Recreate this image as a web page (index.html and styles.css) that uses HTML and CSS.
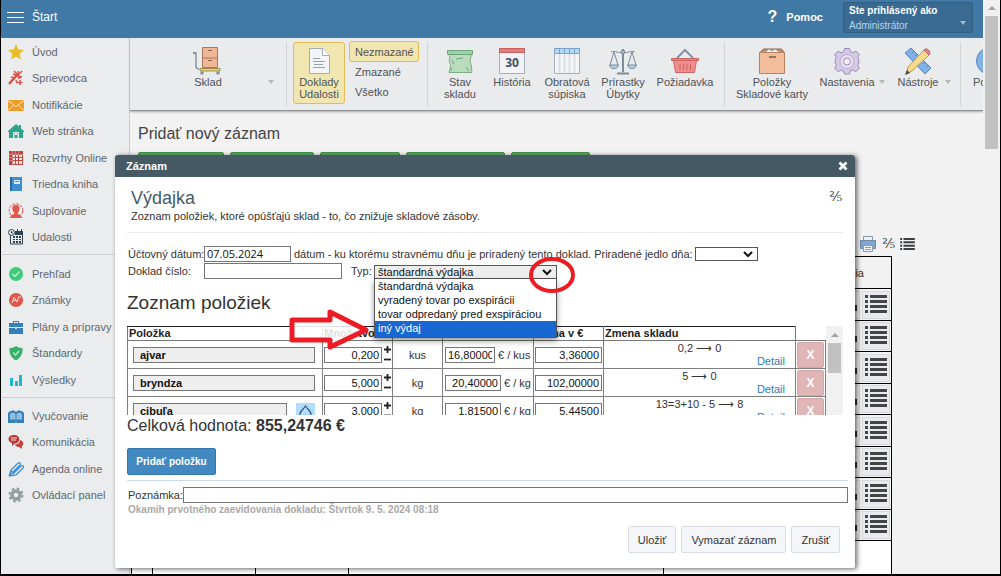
FILE: index.html
```
<!DOCTYPE html>
<html lang="sk">
<head>
    <meta charset="UTF-8">
    <meta name="viewport" content="width=device-width, initial-scale=1.0">
    <title>Výdajka</title>
    <link rel="stylesheet" href="styles.css">
</head>
<body>
    <!-- shared icons -->
    <svg class="sprite" aria-hidden="true">
        <symbol id="list" viewBox="0 0 22 18">
            <path d="M0 0h3v3H0zM5 0h17v3H5zM0 5h3v3H0zM5 5h17v3H5zM0 10h3v3H0zM5 10h17v3H5zM0 15h3v3H0zM5 15h17v3H5z"/>
        </symbol>
        <symbol id="caret" viewBox="0 0 10 7">
            <path d="M1 1l4 4 4-4" fill="none" stroke="#111" stroke-width="2"/>
        </symbol>
        <symbol id="plus" viewBox="0 0 10 10">
            <path d="M2 4.500h7M5.500 1v7" stroke="#222" stroke-width="1.800"/>
        </symbol>
        <symbol id="minus" viewBox="0 0 10 10">
            <path d="M2 4.500h7" stroke="#222" stroke-width="1.800"/>
        </symbol>
    </svg>

    <div class="app">
        <header class="topbar">
            <button class="menu-btn" aria-label="Menu"><i></i><i></i><i></i></button>
            <a class="start" href="#">Štart</a>
            <a class="help" href="#"><span class="help-mark">?</span>Pomoc</a>
            <button class="user">
                <b>Ste prihlásený ako</b>
                <span>Administrátor</span>
                <i class="down"></i>
            </button>
        </header>

        <div class="columns">
            <nav class="sidebar">
                <ul>
                    <li><a href="#"><svg viewBox="0 0 16 16"><path fill="#e9bd27" d="M8 0l2.300 5.400 5.700.5-4.300 3.800L13 15.500 8 12.400l-5 3.100 1.300-5.800L0 5.900l5.700-.5z"/></svg>Úvod</a></li>
                    <li><a href="#"><svg viewBox="0 0 16 16"><g fill="none" stroke="#d9534a"><path stroke-width="2.500" d="M1 14L9 5"/><path stroke-width="1.500" d="M5 4l9 3M10 1l1 8M6 1l7 7M14 1L8 7M3 7l3 1M12 10v5M9.500 12.500h5M8 10l1 3"/></g></svg>Sprievodca</a></li>
                    <li><a href="#"><svg viewBox="0 0 16 16"><path fill="#ee9d28" d="M0 3h16v11H0z"/><path fill="none" stroke="#fbe3bd" d="M0 3.500l8 6 8-6M0 13.500l6-5.500M16 13.500L10 8"/></svg>Notifikácie</a></li>
                    <li><a href="#"><svg viewBox="0 0 16 16"><path fill="#2ea58c" d="M0 8l8-7 3 2.500V2h2v3.500L16 8v1h-1v6H1V9H0z"/><path fill="#dff1ed" d="M5 9h6v6H9.500v-3h-3v3H5z"/><path fill="#2ea58c" d="M6 10h1v1H6zM9 10h1v1H9z"/></svg>Web stránka</a></li>
                    <li><a href="#"><svg viewBox="0 0 16 16"><path fill="#c5443d" d="M1 1h14v14H1z"/><path fill="#f6e4e3" d="M5 5h2v2H5zM8 5h2v2H8zM11 5h3v2h-3zM5 8h2v2H5zM8 8h2v2H8zM11 8h3v2h-3zM5 11h2v3H5zM8 11h2v3H8zM11 11h3v3h-3z"/><path stroke="#e9bfbd" d="M1 4.500h14M4.500 1v14M1 7.500h3M1 10.500h3M7.500 1v3M10.500 1v3" stroke-width=".5"/></svg>Rozvrhy Online</a></li>
                    <li><a href="#"><svg viewBox="0 0 16 16"><path fill="#3d8fd1" d="M2 1h12v14H2z"/><path fill="#2767a0" d="M2 1h2v14H2z"/><path fill="#d9eaf8" d="M6 4h6v4H6z"/><path stroke="#3d8fd1" d="M7 5.500h4"/></svg>Triedna kniha</a></li>
                    <li><a href="#"><svg viewBox="0 0 16 16"><circle cx="8" cy="7.500" r="6.800" fill="none" stroke="#e2574c" stroke-dasharray="3 1"/><path fill="#e2574c" d="M8 2c3 0 4 2 3.500 4.500S10 9.500 9.500 10.500c1 1 4 1 4.500 4.500H2c.5-3.500 3.500-3.500 4.500-4.500C6 9.500 5 9 4.500 6.500S5 2 8 2z"/></svg>Suplovanie</a></li>
                    <li><a href="#"><svg viewBox="0 0 16 16"><path fill="none" stroke="#2f4253" d="M2.500 4v11h12V3H8"/><path fill="#2f4253" d="M7 2h8v4H7zM5 7h2v2H5zM8 7h2v2H8zM11 7h2v2h-2zM5 10h2v1H5zM8 10h2v1H8zM11 10h2v1h-2zM5 12h2v2H5zM8 12h2v2H8zM11 12h2v2h-2zM9 0h1v3H9zM13 0h1v3h-1z"/><circle cx="3.500" cy="3.500" r="3" fill="#eaecee" stroke="#2f4253"/><path d="M3.500 2v2H5" fill="none" stroke="#2f4253"/></svg>Udalosti</a></li>
                </ul>
                <ul>
                    <li><a href="#"><svg viewBox="0 0 16 16"><circle cx="8" cy="8" r="7" fill="#3fca7c"/><path d="M4.500 8l2.500 2.500 4.500-5" fill="none" stroke="#c9f4db" stroke-width="1.200"/></svg>Prehľad</a></li>
                    <li><a href="#"><svg viewBox="0 0 16 16"><circle cx="8" cy="8" r="7" fill="#df5548"/><path d="M4 11l2-6 3 5 2-5M4.500 9l4-1M10 5h3" fill="none" stroke="#f8d5d1"/></svg>Známky</a></li>
                    <li><a href="#"><svg viewBox="0 0 16 16"><path fill="#3580ba" d="M1 4h4V2h6v2h4v4H1zM1 9h14v6H1zM6 3v1h4V3z" fill-rule="evenodd"/><path fill="#cfe3f2" d="M7 8h2v2H7z"/></svg>Plány a prípravy</a></li>
                    <li><a href="#"><svg viewBox="0 0 16 16"><path fill="#38b069" d="M8 1c2 1.500 4 2 6.500 2 .5 6-2 10-6.500 12.500C3.500 13 1 9 1.500 3 4 3 6 2.500 8 1z"/><path d="M5 7.500l2.500 2.500L11 6" fill="none" stroke="#c9f4db" stroke-width="1.200"/></svg>Štandardy</a></li>
                    <li><a href="#"><svg viewBox="0 0 16 16"><path fill="#18b9cf" d="M2 6h3v8H2zM7 9h3v5H7zM11 3h3v11h-3z"/></svg>Výsledky</a></li>
                </ul>
                <ul>
                    <li><a href="#"><svg viewBox="0 0 16 16"><path fill="#3580ba" d="M0 5C3 2 6 2 8 4c2-2 5-2 8 1v10h-7l-1-1-1 1H0z"/><path d="M2 12V6c2-2 4-1.500 5.500 0v6C6 11 4 11 2 12zM14 12V6c-2-2-4-1.500-5.500 0v6c1.500-1 3.500-1 5.500 0z" fill="#8fbfe2"/></svg>Vyučovanie</a></li>
                    <li><a href="#"><svg viewBox="0 0 16 16"><path fill="#b93b33" d="M6 1c7 0 7 8 1 8.500L4 12V9C-1 8-1 1 6 1z"/><path fill="#c5443d" d="M12 6c4 1 4 5 2 6v3l-3-2c-2 0-4-1-4-2.500 3-.5 5-1.500 5-4.500z"/><path d="M3 4h6M3 6h5" stroke="#f6dedc"/></svg>Komunikácia</a></li>
                    <li><a href="#"><svg viewBox="0 0 16 16"><path fill="none" stroke="#3d8fd1" stroke-width="1.300" d="M1 15l2-6 7-7c2-1 3 0 2 2l-7 7-4 4M5 13l8-8c2-1 3 0 2 2l-7 7-7 1M3 10l3 3"/></svg>Agenda online</a></li>
                    <li><a href="#"><svg viewBox="0 0 16 16"><circle cx="8" cy="8" r="4" fill="none" stroke="#949e9f" stroke-width="3.500"/><circle cx="8" cy="8" r="6.500" fill="none" stroke="#949e9f" stroke-width="2" stroke-dasharray="2.600 2.500"/></svg>Ovládací panel</a></li>
                </ul>
            </nav>

            <main>
                <div class="ribbon">
                    <div class="group group-stock">
                        <button class="tool wide">
                            <svg viewBox="0 0 30 30"><path fill="#efb798" stroke="#a9765b" d="M9.500 1.500h15v20h-15zM9.500 12h15"/><path stroke="#8c5b44" d="M15 4.500h4M15 14.500h4"/><path fill="#e9d27a" stroke="#a39148" d="M7 22.500h20v2.500H7z"/><path fill="none" stroke="#8194a6" stroke-width="1.500" d="M0 7h3v13c0 2 1 3 3 3"/><circle cx="1" cy="7" r="1.300" fill="#8194a6"/><circle cx="9" cy="27" r="1.800" fill="#8194a6"/><circle cx="25" cy="27" r="1.800" fill="#8194a6"/></svg>
                            Sklad
                            <i class="down"></i>
                        </button>
                    </div>
                    <div class="group group-docs">
                        <button class="tool docs active">
                            <svg viewBox="0 0 30 30"><path fill="#f3f4f6" stroke="#a3acb7" d="M5.500 2.500h13l7 7v18h-20z"/><path fill="#fff" stroke="#a3acb7" d="M18.500 2.500v7h7"/><path stroke="#98a1ae" d="M9 12.500h7M9 15.500h12M10 18.500h9M9 21.500h12"/></svg>
                            Doklady<br>Udalosti
                        </button>
                        <div class="filters">
                            <button class="active">Nezmazané</button>
                            <button>Zmazané</button>
                            <button>Všetko</button>
                        </div>
                    </div>
                    <div class="group group-views">
                        <button class="tool w52">
                            <svg viewBox="0 0 30 30"><path fill="#b9dcbd" stroke="#7cae87" d="M4 8h23c-1 4-3 6-1 10l1 8.500H4c2-6 2-8 0-12 1-2 1-4 0-6.500z"/><path fill="#9fd0a7" stroke="#6fa57c" d="M2.500 4.500h25v4h-25z"/><path fill="none" stroke="#6fa57c" d="M11 13l7-1M7 14l2 4M7 22l-2 3M21 21l3 4"/></svg>
                            Stav<br>skladu
                        </button>
                        <button class="tool w52">
                            <svg viewBox="0 0 30 30"><path fill="#f2f4f7" stroke="#a3afbf" d="M2.500 2.500h25v25h-25z"/><path fill="#e27f7d" stroke="#c95f5c" d="M2.500 2.500h25v4h-25z"/><text x="15" y="21" text-anchor="middle">30</text></svg>
                            História
                        </button>
                        <button class="tool w58">
                            <svg viewBox="0 0 30 30"><path fill="#f4f5f6" stroke="#a3afbf" d="M2.500 2.500h25v25h-25z"/><path fill="#b3d9f2" stroke="#7da2c6" d="M2.500 2.500h25v5h-25z"/><path stroke="#7da2c6" d="M7.500 3v4M12.500 3v4M17.500 3v4M22.500 3v4"/><path stroke="#dadfe5" stroke-width="2" d="M7.500 8v19M12.500 8v19M17.500 8v19M22.500 8v19"/></svg>
                            Obratová<br>súpiska
                        </button>
                        <button class="tool w54">
                            <svg viewBox="0 0 30 30"><g fill="none" stroke="#7b8b9b"><path stroke-width="2" d="M15 3v23M9 27.500h12"/><path d="M3 6c5-2 7 2 12 0 5 2 7-2 12 0M6 6L2 19M6 6l4 13M24 6l-4 13M24 6l4 13"/><path fill="#a8cfec" d="M1.500 19h9c-1 5-8 5-9 0zM19.500 19h9c-1 5-8 5-9 0z"/><circle cx="15" cy="6" r="2" fill="#a9b5c1"/></g></svg>
                            Prírastky<br>Úbytky
                        </button>
                        <button class="tool w70">
                            <svg viewBox="0 0 30 30"><path fill="none" stroke="#8293a8" stroke-width="2" d="M7 12l8-8 8 8"/><path fill="#ef8e8c" stroke="#cf6765" d="M3.500 14.500h23l-2 12h-19z"/><path fill="#e57c7a" stroke="#cf6765" d="M1.500 12.500h27v2h-27z"/><path stroke="#c96361" d="M10 18v6M13.500 18v6M17 18v6M20.500 18v6"/></svg>
                            Požiadavka
                        </button>
                    </div>
                    <div class="group group-setup">
                        <button class="tool w86">
                            <svg viewBox="0 0 30 30"><path fill="#c98f6d" stroke="#8f6448" d="M2.500 7l4-4h18l3 4z"/><path fill="#eef3f7" stroke="#8fa5b8" d="M7 7l5-4 3 2 3-2 6 4z"/><path fill="#f3bd9b" stroke="#b98262" d="M2.500 6.500h25v21h-25z"/><path stroke="#87583c" stroke-width="1.500" d="M12 11h7"/></svg>
                            Položky<br>Skladové karty
                        </button>
                        <button class="tool w76">
                            <svg viewBox="0 0 30 30"><path fill="#d5cae6" stroke="#9c8ab8" d="M12.500 2.500h5l.8 3.200 2.700 1.100 2.900-1.700 3.500 3.500-1.700 2.900 1.100 2.300v3l-1.100 2.500 1.700 2.900-3.500 3.500-2.900-1.700-2.700 1.100-.8 2.900h-5l-.8-2.900L9 24l-2.900 1.700-3.500-3.500 1.700-2.900-1.100-2.500v-3l1.100-2.300-1.700-2.900 3.500-3.500L9 6.800l2.700-1.100z"/><circle cx="15" cy="15.500" r="7" fill="#e6e0f0" stroke="#b9acd0"/><circle cx="15" cy="15.500" r="3.500" fill="#f1eff5" stroke="#9c8ab8"/></svg>
                            Nastavenia
                            <i class="down"></i>
                        </button>
                        <button class="tool w66">
                            <svg viewBox="0 0 30 30"><path fill="#80b1e8" stroke="#5687bd" d="M2 7l6-5 20 20-6 6z"/><path stroke="#49759f" d="M11 5.500L9.500 7M14 8.500L12.500 10M19 13.500L17.500 15M22 16.500L20.500 18M25 19.500L23.500 21"/><path fill="#f5dc8e" stroke="#b89850" d="M5 21L21 4l5 5L9 25l-6 3z"/><path fill="#e98486" stroke="#bc5e61" d="M21 4c2-3 8 1 5 5z"/><path fill="#4a4a4a" d="M2 29l2-5 3 3z"/></svg>
                            Nástroje
                            <i class="down"></i>
                        </button>
                    </div>
                    <div class="group group-help">
                        <button class="tool w46">
                            <svg viewBox="0 0 30 30"><circle cx="15" cy="15" r="13.500" fill="#80b1e8" stroke="#5687bd"/></svg>
                            Pomoc
                        </button>
                    </div>
                </div>

                <section class="page">
                    <h1>Pridať nový záznam</h1>
                    <div class="new-buttons"><i class="g86"></i><i class="g84"></i><i class="g80"></i><i class="g99"></i><i class="g79"></i></div>
                    <div class="page-tools">
                        <svg class="printer" viewBox="0 0 18 18"><path fill="#eef1f4" stroke="#8b9aa8" d="M4.500 1.500h9v5h-9z"/><path fill="#7fa7d6" stroke="#7389a6" d="M1.500 5.500h15v8h-15z"/><path fill="#f5f7f9" stroke="#8b9aa8" d="M4.500 10.500h9v6h-9z"/><path stroke="#8b9aa8" d="M6 12.500h6M6 14.500h6"/></svg>
                        <span class="fraction">⅖</span>
                        <svg class="list-small"><use href="#list"/></svg>
                    </div>
                    <table class="records">
                        <colgroup><col class="c21"><col class="c103"><col class="c93"><col class="c315"><col></colgroup>
                        <tr><th colspan="5">Akcia</th></tr>
                        <tr><td colspan="5"><div class="actions"><i></i><button aria-label="Menu"><svg><use href="#list"/></svg></button></div></td></tr>
                        <tr><td colspan="5"><div class="actions"><i></i><button aria-label="Menu"><svg><use href="#list"/></svg></button></div></td></tr>
                        <tr><td colspan="5"><div class="actions"><i></i><button aria-label="Menu"><svg><use href="#list"/></svg></button></div></td></tr>
                        <tr><td colspan="5"><div class="actions"><i></i><button aria-label="Menu"><svg><use href="#list"/></svg></button></div></td></tr>
                        <tr><td colspan="5"><div class="actions"><i></i><button aria-label="Menu"><svg><use href="#list"/></svg></button></div></td></tr>
                        <tr><td colspan="5"><div class="actions"><i></i><button aria-label="Menu"><svg><use href="#list"/></svg></button></div></td></tr>
                        <tr><td colspan="5"><div class="actions"><i></i><button aria-label="Menu"><svg><use href="#list"/></svg></button></div></td></tr>
                        <tr><td colspan="5"><div class="actions"><i></i><button aria-label="Menu"><svg><use href="#list"/></svg></button></div></td></tr>
                        <tr class="blank"><td></td><td></td><td></td><td></td><td></td></tr>
                    </table>
                </section>
            </main>
        </div>

        <div class="dialog" role="dialog" aria-labelledby="dialog-title">
            <div class="dialog-bar">
                <span id="dialog-title">Záznam</span>
                <button class="close" aria-label="Zavrieť"><svg viewBox="0 0 10 10"><path d="M1.500 1.500l7 7M8.500 1.500l-7 7" stroke="#fff" stroke-width="2.800"/></svg></button>
            </div>
            <form class="dialog-body">
                <div class="intro">
                    <div>
                        <h2>Výdajka</h2>
                        <p>Zoznam položiek, ktoré opúšťajú sklad - to, čo znižuje skladové zásoby.</p>
                    </div>
                    <span class="fraction">⅖</span>
                </div>

                <div class="row">
                    <label class="first" for="date">Účtovný dátum:</label>
                    <input class="date" id="date" type="text" value="07.05.2024">
                    <span class="hint">dátum - ku ktorému stravnému dňu je priradený tento doklad.</span>
                    <label for="meal">Priradené jedlo dňa:</label>
                    <span class="select meal"><select id="meal"><option></option></select><svg><use href="#caret"/></svg></span>
                </div>
                <div class="row">
                    <label class="first" for="number">Doklad číslo:</label>
                    <input class="number" id="number" type="text">
                    <label class="type-label" for="type">Typ:</label>
                    <span class="select type">
                        <select id="type"><option>štandardná výdajka</option></select><svg><use href="#caret"/></svg>
                        <ul class="options">
                            <li>štandardná výdajka</li>
                            <li>vyradený tovar po exspirácii</li>
                            <li>tovar odpredaný pred exspiráciou</li>
                            <li class="chosen">iný výdaj</li>
                        </ul>
                        <svg class="ring" viewBox="0 0 48 38"><ellipse cx="24" cy="19" rx="21" ry="16" fill="none" stroke="#ed1c24" stroke-width="4"/></svg>
                    </span>
                </div>

                <h3>Zoznam položiek</h3>
                <div class="scroller">
                    <table class="items">
                        <colgroup><col class="c195"><col class="c70"><col class="c50"><col class="c91"><col class="c70"><col><col class="c30"></colgroup>
                        <tr><th>Položka</th><th>Množstvo</th><th></th><th></th><th class="sum">Suma v €</th><th>Zmena skladu</th><th class="none"></th></tr>
                        <tr>
                            <td class="name"><div><input type="text" aria-label="Položka" value="ajvar" readonly></div></td>
                            <td><div class="qty"><input type="text" aria-label="Množstvo" value="0,200"><span><button type="button" aria-label="Viac"><svg><use href="#plus"/></svg></button><button type="button" aria-label="Menej"><svg><use href="#minus"/></svg></button></span></div></td>
                            <td class="unit">kus</td>
                            <td><div class="price"><input class="short" type="text" aria-label="Cena" value="16,80000"> € / kus</div></td>
                            <td><div class="total"><input type="text" aria-label="Suma" value="3,36000"></div></td>
                            <td class="change"><p>0,2 ⟶ 0</p><a href="#">Detail</a></td>
                            <td class="del"><button type="button">X</button></td>
                        </tr>
                        <tr>
                            <td class="name"><div><input type="text" aria-label="Položka" value="bryndza" readonly></div></td>
                            <td><div class="qty"><input type="text" aria-label="Množstvo" value="5,000"><span><button type="button" aria-label="Viac"><svg><use href="#plus"/></svg></button><button type="button" aria-label="Menej"><svg><use href="#minus"/></svg></button></span></div></td>
                            <td class="unit">kg</td>
                            <td><div class="price"><input type="text" aria-label="Cena" value="20,40000"> € / kg</div></td>
                            <td><div class="total"><input type="text" aria-label="Suma" value="102,00000"></div></td>
                            <td class="change"><p>5 ⟶ 0</p><a href="#">Detail</a></td>
                            <td class="del"><button type="button">X</button></td>
                        </tr>
                        <tr>
                            <td class="name"><div><input type="text" aria-label="Položka" value="cibuľa" readonly><button class="shape" type="button" aria-label="Sklad"><svg viewBox="0 0 19 17"><path d="M9.500 3C7 7 4 8 4 11c0 3 4 3.500 5.500 1.500C11 14.500 15 14 15 11c0-3-3-4-5.500-8z" fill="none" stroke="#33506b" stroke-width="1.200"/></svg></button></div></td>
                            <td><div class="qty"><input type="text" aria-label="Množstvo" value="3,000"><span><button type="button" aria-label="Viac"><svg><use href="#plus"/></svg></button><button type="button" aria-label="Menej"><svg><use href="#minus"/></svg></button></span></div></td>
                            <td class="unit">kg</td>
                            <td><div class="price"><input type="text" aria-label="Cena" value="1,81500"> € / kg</div></td>
                            <td><div class="total"><input type="text" aria-label="Suma" value="5,44500"></div></td>
                            <td class="change"><p>13=3+10 - 5 ⟶ 8</p><a href="#">Detail</a></td>
                            <td class="del"><button type="button">X</button></td>
                        </tr>
                    </table>
                    <div class="bar"><i class="up"></i><i class="thumb"></i></div>
                    <svg class="arrow" viewBox="0 0 84 46"><path d="M3 13h38V5l36 18-36 17v-7H3z" fill="#fff" fill-opacity=".85" stroke="#ed1c24" stroke-width="5" stroke-linejoin="round"/></svg>
                </div>

                <p class="value">Celková hodnota: <b>855,24746 €</b></p>
                <button class="add" type="button">Pridať položku</button>

                <div class="row note">
                    <label for="note">Poznámka:</label>
                    <input id="note" type="text">
                </div>
                <p class="stamp">Okamih prvotného zaevidovania dokladu: Štvrtok 9. 5. 2024 08:18</p>

                <div class="footer">
                    <button type="button">Uložiť</button>
                    <button type="button">Vymazať záznam</button>
                    <button type="button">Zrušiť</button>
                </div>
            </form>
        </div>
    </div>
    <div class="bar page-bar"><i class="up"></i><i class="thumb"></i></div>
</body>
</html>
```
FILE: styles.css
```
* {
    margin: 0;
    padding: 0;
    box-sizing: border-box;
}

body {
    display: flex;
    height: 100vh;
    overflow: hidden;
    border: 1px solid #000;
    border-top: 0;
    border-bottom-width: 2px;
    background: #f2f2f2;
    color: #333;
    font: 11px/14px "Liberation Sans", Arial, sans-serif;
}

button, input, select {
    font: inherit;
    color: inherit;
}

button {
    border: 0;
    background: none;
}

a {
    color: inherit;
    text-decoration: none;
}

ul {
    list-style: none;
}

.sprite {
    position: absolute;
    width: 0;
    height: 0;
}

.app {
    flex: 1;
    min-width: 0;
    position: relative;
    display: flex;
    flex-direction: column;
    overflow: hidden;
}

/* top bar */
.topbar {
    display: flex;
    align-items: center;
    height: 38px;
    padding: 0 10px 4px 6px;
    background: #4079a6;
    color: #fff;
    flex: none;
}

.menu-btn {
    display: flex;
    flex-direction: column;
    gap: 4px;
    width: 17px;
}

.menu-btn i {
    height: 1px;
    background: #fff;
}

.start {
    margin-left: 8px;
    font-size: 12px;
}

.help {
    display: flex;
    align-items: center;
    gap: 9px;
    margin-left: auto;
    font-weight: bold;
}

.help-mark {
    font-size: 16px;
}

.user {
    position: relative;
    width: 130px;
    height: 31px;
    margin-left: 20px;
    padding: 0 5px;
    border: 1px solid #315f84;
    border-radius: 2px;
    background: #386a92;
    text-align: left;
    font-size: 10px;
}

.user b, .user span {
    display: block;
    line-height: 15px;
}

.user span {
    color: #b5d6f3;
}

.down {
    position: absolute;
    right: 6px;
    border: 3px solid transparent;
    border-top: 4px solid #b5b7ba;
    border-bottom: 0;
}

.user .down {
    bottom: 7px;
}

.columns {
    flex: 1;
    display: flex;
    min-height: 0;
}

/* sidebar */
.sidebar {
    width: 129px;
    flex: none;
    border-right: 1px solid #c9cbcd;
    background: #eaecee;
    color: #5f6870;
}

.sidebar ul {
    padding-bottom: 4px;
    border-bottom: 1px solid #cfd1d3;
}

.sidebar ul + ul {
    padding-top: 5px;
}

.sidebar ul:last-child {
    padding-top: 4px;
    border-bottom: 0;
}

.sidebar a {
    display: flex;
    align-items: center;
    gap: 8px;
    height: 27px;
    padding-left: 7px;
    white-space: nowrap;
}

.sidebar li:nth-child(even) a {
    height: 26px;
}

.sidebar svg {
    width: 16px;
    height: 16px;
}

/* ribbon */
main {
    flex: 1;
    min-width: 0;
    display: flex;
    flex-direction: column;
}

.ribbon {
    display: flex;
    flex: none;
    height: 73px;
    padding-top: 4px;
    border-bottom: 1px solid #8f9194;
    background: #eaebed;
    box-shadow: 0 1px 2px #aaa;
    color: #4f5255;
    overflow: hidden;
}

.group {
    display: flex;
    align-items: flex-start;
    flex: none;
    height: 64px;
    border-right: 1px solid #d2d4d6;
}

.group-docs {
    gap: 4px;
    padding: 0 8px 0 6px;
}

.group-views {
    padding: 0 4px 0 6px;
}

.group-setup {
    padding: 0 3px 0 4px;
}

.group-help {
    padding-left: 6px;
    border-right: 0;
}

.tool {
    position: relative;
    display: block;
    padding-top: 4px;
    line-height: 12px;
    white-space: nowrap;
}

.tool svg {
    display: block;
    width: 30px;
    height: 30px;
    margin: 0 auto;
}

.tool text {
    font: bold 12px "Open Sans", sans-serif;
    fill: #44505f;
}

.tool .down {
    top: 38px;
}

.wide { width: 156px; }
.docs { width: 52px; }
.w46 { width: 46px; }
.w52 { width: 52px; }
.w54 { width: 54px; }
.w58 { width: 58px; }
.w70 { width: 70px; }
.w86 { width: 86px; }

.w66 {
    width: 66px;
    padding-right: 12px;
}

.w76 {
    width: 76px;
    padding-right: 12px;
}

.wide .down {
    right: 12px;
}

.active {
    border: 1px solid #e2bd55;
    border-radius: 3px;
    background: #f2e6b0;
}

.docs.active {
    height: 62px;
    padding-top: 0;
}

.filters button {
    display: block;
    width: 70px;
    height: 20px;
    padding-left: 6px;
    text-align: left;
}

.filters .active {
    height: 21px;
    margin-top: -1px;
    padding-left: 5px;
}

/* page under the dialog */
.page {
    flex: 1;
    min-height: 0;
    padding-top: 12px;
}

.page h1 {
    padding-left: 8px;
    font-size: 16px;
    line-height: 22px;
    font-weight: normal;
    color: #444;
}

.new-buttons {
    display: flex;
    gap: 6px;
    padding: 7px 8px 0;
}

.new-buttons i {
    height: 28px;
    border: 1px solid #43914a;
    border-radius: 2px;
    background: #5dab61;
}

.g79 { width: 79px; }
.g80 { width: 80px; }
.g84 { width: 84px; }
.g86 { width: 86px; }
.g99 { width: 99px; }

.page-tools {
    display: flex;
    justify-content: flex-end;
    align-items: center;
    gap: 5px;
    height: 20px;
    margin: 54px 68px 2px 0;
}

.printer {
    width: 18px;
    height: 18px;
}

.fraction {
    font: 13px/18px "DejaVu Serif", serif;
}

.list-small {
    width: 15px;
    height: 12px;
    fill: #3c3f42;
}

.records {
    width: calc(100% - 92px);
    margin-left: 1px;
    border-collapse: collapse;
    table-layout: fixed;
}

.records th, .records td {
    height: 32px;
    border: 1px solid #000;
}

.records tr:nth-child(odd) td {
    height: 31px;
}

.records th {
    padding-right: 27px;
    text-align: right;
    font-weight: normal;
}

.actions {
    display: flex;
    justify-content: flex-end;
    gap: 2px;
    padding-right: 1px;
}

.actions i {
    width: 24px;
    height: 28px;
    border: 1px solid #d6d8dc;
    background: linear-gradient(90deg, transparent 18px, #333 18px) 0 13px / 20px 6px no-repeat;
}

.actions button {
    width: 28px;
    height: 28px;
    border: 1px solid #d6d8dc;
    background: #e9eaef;
}

.actions svg {
    display: block;
    width: 22px;
    height: 18px;
    margin: 0 auto 2px;
    fill: #444;
}

.records .blank td {
    height: 60px;
    background: #fff;
}

.c21 { width: 21px; }
.c103 { width: 103px; }
.c93 { width: 93px; }
.c315 { width: 315px; }

/* dialog */
.dialog {
    position: absolute;
    top: 155px;
    left: 114px;
    right: 128px;
    background: #fff;
    border-radius: 3px 3px 2px 2px;
    box-shadow: 2px 1px 5px rgba(0, 0, 0, 0.6);
}

.dialog-bar {
    display: flex;
    align-items: center;
    justify-content: space-between;
    height: 22px;
    padding: 0 7px 0 11px;
    border-radius: 3px 3px 0 0;
    background: #465a65;
    color: #fff;
    font-weight: bold;
}

.close {
    width: 10px;
    height: 10px;
}

.close svg {
    display: block;
    width: 10px;
    height: 10px;
}

.dialog-body {
    padding: 11px 12px 15px;
}

.intro {
    display: flex;
    justify-content: space-between;
    height: 45px;
    margin-bottom: 12px;
    padding: 0 1px 0 4px;
    border-bottom: 1px solid #eaeaea;
}

.intro h2 {
    font-size: 18px;
    line-height: 21px;
    font-weight: normal;
    color: #465a6d;
}

.intro p {
    line-height: 14px;
}

.row {
    display: flex;
    align-items: center;
    height: 17px;
    padding-left: 1px;
    white-space: nowrap;
}

.row .first {
    width: 76px;
}

input {
    min-width: 0;
    height: 16px;
    border: 1px solid #767676;
    background: #fff;
    padding: 0 2px;
    color: #111;
}

.date {
    width: 87px;
    font-family: "Open Sans", sans-serif;
}

.hint {
    margin: 0 3px;
}

.number {
    width: 138px;
}

.type-label {
    width: 32px;
    padding-left: 9px;
}

.select {
    position: relative;
    display: block;
}

.select select {
    display: block;
    appearance: none;
    width: 100%;
    height: 14px;
    padding: 0 3px;
    border: 1px solid #555;
    border-radius: 0;
    background: #fff;
    line-height: 12px;
    color: #111;
}

.select > svg {
    position: absolute;
    top: 4px;
    right: 5px;
    width: 10px;
    height: 7px;
}

.meal {
    width: 63px;
    margin-left: 2px;
}

.type {
    width: 183px;
    margin-top: 2px;
}

.type select {
    background: #eee;
}

.options {
    position: absolute;
    z-index: 2;
    top: 14px;
    left: 0;
    right: 0;
    border: 1px solid #555;
    border-top: 0;
    background: #fff;
    box-shadow: 0 3px 6px rgba(0, 0, 0, 0.4);
    color: #111;
}

.options li {
    height: 14px;
    padding-left: 3px;
}

.options .chosen {
    height: 16px;
    background: #1967d2;
    color: #fff;
}

.select > .ring {
    z-index: 3;
    top: -9px;
    right: -19px;
    width: 48px;
    height: 38px;
}

.dialog h3 {
    margin: 13px 0 12px;
    font-size: 19px;
    line-height: 22px;
    font-weight: normal;
}

.scroller {
    position: relative;
    display: flex;
    height: 89px;
    clip-path: inset(-30px 0 0 0);
}

.items {
    flex: 1;
    width: 100%;
    height: 0;
    border-collapse: collapse;
    table-layout: fixed;
}

.items th {
    height: 14px;
    border: 1px solid #777;
    border-top-color: #222;
    line-height: 13px;
    text-align: left;
    padding-left: 1px;
    overflow: hidden;
    color: #222;
}

.items .sum {
    padding-right: 20px;
    text-align: right;
    white-space: nowrap;
}

.items .none {
    border-top: 0;
    border-right: 0;
}

.items td {
    height: 28px;
    border: 1px solid #808080;
}

.c195 { width: 195px; }
.c70 { width: 70px; }
.c50 { width: 50px; }
.c91 { width: 91px; }
.c30 { width: 30px; }

.name div {
    display: flex;
    justify-content: space-between;
    padding: 0 7px 0 5px;
}

.name input {
    flex: 1;
    padding-left: 6px;
    background: #eee;
    font-weight: bold;
}

.shape {
    width: 19px;
    height: 16px;
    margin-left: 9px;
    background: #b0dcff;
}

.shape svg {
    display: block;
}

.qty, .price, .total {
    display: flex;
    align-items: center;
    padding-left: 1px;
    text-align: right;
}

.qty input {
    width: 58px;
    text-align: right;
}

.qty button {
    display: block;
    width: 10px;
    height: 10px;
}

.qty svg {
    display: block;
    width: 10px;
    height: 10px;
}

.unit {
    text-align: center;
}

.price {
    gap: 3px;
    padding-left: 2px;
    white-space: nowrap;
}

.price input {
    width: 56px;
    text-align: right;
}

.price .short {
    width: 50px;
}

.total input {
    width: 67px;
    text-align: right;
}

.change p {
    line-height: 14px;
    margin-top: -1px;
    text-align: center;
}

.change a {
    display: block;
    padding-right: 10px;
    line-height: 12px;
    text-align: right;
    color: #337ab7;
}

.del button {
    display: block;
    width: 27px;
    height: 26px;
    margin: 0 auto;
    border: 1px solid #d3a7a7;
    border-radius: 2px;
    background: #dfb5b5;
    color: #fff;
    font-size: 12px;
    font-weight: bold;
}

.bar {
    display: flex;
    flex-direction: column;
    align-items: center;
    width: 17px;
    flex: none;
    background: #f1f1f1;
}

.bar .up {
    margin: 7px 0 6px;
    border: 4px solid transparent;
    border-top: 0;
    border-bottom-color: #a3a3a3;
}

.bar .thumb {
    width: 13px;
    height: 30px;
    background: #c1c1c1;
}

.page-bar .up {
    margin: 6px 0;
}

.page-bar .thumb {
    height: 133px;
}

.arrow {
    position: absolute;
    z-index: 3;
    top: -19px;
    left: 162px;
    width: 84px;
    height: 46px;
}

.value {
    margin-bottom: 11px;
    font-size: 16px;
    line-height: 22px;
}

.add {
    width: 89px;
    height: 27px;
    border: 1px solid #3577ab;
    border-radius: 2px;
    background: #4289c2;
    color: #fff;
    font-size: 10px;
    font-weight: bold;
}

.note {
    height: 23px;
    margin: 5px -5px 0 0;
    padding-top: 6px;
    border-top: 1px solid #c8d9e8;
}

.note label {
    width: 55px;
}

.note input {
    flex: 1;
}

.stamp {
    margin-bottom: 9px;
    padding-left: 1px;
    color: #aaa;
    font-size: 10px;
    font-weight: bold;
}

.footer {
    display: flex;
    justify-content: flex-end;
    gap: 5px;
    padding-right: 3px;
}

.footer button {
    height: 27px;
    padding: 0 9px;
    border: 1px solid #d8dbe2;
    border-radius: 2px;
    background: #f5f6fa;
}
```
